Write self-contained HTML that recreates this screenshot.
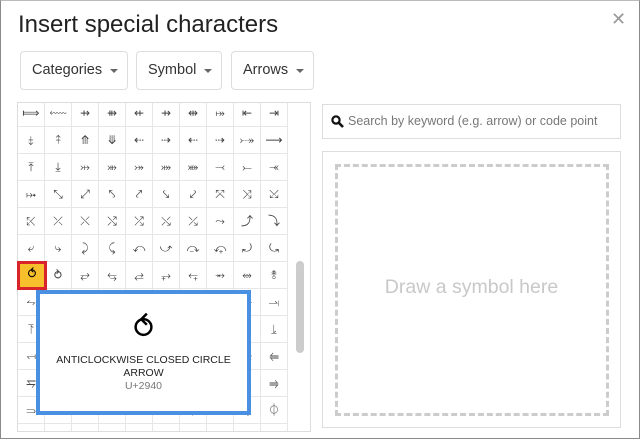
<!DOCTYPE html>
<html><head><meta charset="utf-8"><style>
*{box-sizing:border-box;margin:0;padding:0}
body{width:640px;height:439px;background:#fff;position:relative;overflow:hidden;font-family:"Liberation Sans","DejaVu Sans",sans-serif}
.frame{position:absolute;left:0;top:0;width:640px;height:439px;border:1px solid #8a8a8a;border-top-color:#bbb}
.title{position:absolute;left:18px;top:11px;font-size:24px;color:#222}
.close{position:absolute;left:611px;top:9px;font-size:18px;color:#999}
.btn{position:absolute;top:51px;height:39px;border:1px solid #ddd;border-radius:4px;font-size:14.5px;color:#333;line-height:37px;padding-left:11px}
.btn:after{content:"";position:absolute;right:9px;top:17px;border-left:4px solid transparent;border-right:4px solid transparent;border-top:4px solid #666}
.gridwrap{position:absolute;left:17px;top:102px;width:294px;height:330px;border:1px solid #ddd;overflow:hidden}
.cell{position:absolute;width:27px;height:27px;border-right:1px solid #e6e6e6;border-bottom:1px solid #e6e6e6;text-align:center;line-height:26px;font-size:12px;color:#444;font-family:"DejaVu Sans",sans-serif}
.sb{position:absolute;left:296px;top:261px;width:8px;height:92px;background:#ccc;border-radius:4px}
.sel{position:absolute;left:17px;top:261px;width:30px;height:29px;background:#f7bf2c;border:3px solid #d8232a;text-align:center;line-height:22px;font-size:13px;font-family:"DejaVu Sans",sans-serif}
.tip{position:absolute;left:36px;top:290px;width:215px;height:125px;background:#fff;border:4px solid #4a90e2;text-align:center}
.search{position:absolute;left:322px;top:104px;width:299px;height:35px;border:1px solid #ddd;font-size:12.5px;color:#777;line-height:33px;padding-left:25px}
.draw{position:absolute;left:322px;top:151px;width:299px;height:277px;border:1px solid #ddd}
.dash{position:absolute;left:12px;top:12px;width:274px;height:252px;border:3px dashed #ccc}
.dt{position:absolute;left:0;width:100%;top:124px;text-align:center;font-size:19.5px;color:#c8c8c8}
</style></head><body>
<div class="frame"></div>
<div class="title">Insert special characters</div>
<div class="close">✕</div>
<div class="btn" style="left:20px;width:108px">Categories</div>
<div class="btn" style="left:136px;width:86px">Symbol</div>
<div class="btn" style="left:231px;width:83px">Arrows</div>
<div class="gridwrap" id="g"></div>
<div class="sb"></div>
<div class="sel">⥀</div>
<div class="tip">
<div style="font-size:30px;margin-top:18px;line-height:34px;font-family:'DejaVu Sans',sans-serif">⥀</div>
<div style="font-size:10.5px;color:#222;margin-top:8px;line-height:13px">ANTICLOCKWISE CLOSED CIRCLE<br>ARROW</div>
<div style="font-size:10.5px;color:#777;line-height:13px">U+2940</div>
</div>
<div class="search"><svg style="position:absolute;left:8px;top:10px" width="13" height="13" viewBox="0 0 13 13"><circle cx="5" cy="5" r="3.6" fill="none" stroke="#111" stroke-width="2.2"/><path d="M7.8 7.8l4.2 4.2" stroke="#111" stroke-width="2.6"/></svg>Search by keyword (e.g. arrow) or code point</div>
<div class="draw"><div class="dash"></div><div class="dt">Draw a symbol here</div></div>
<script>
var rows=["⟾⬳⇸⇻⇷⇸⇹⤅⇤⇥","⤈⤉⤊⤋⇠⇢⇠⇢⤐⟶","⤒⤓⤔⤕⤖⤗⤘⤙⤚⤛","⤠⤡⤢⤣⤤⤥⤦⤧⤨⤩","⤪⤫⤬⤭⤮⤯⤰⤳⤴⤵","⤶⤷⤸⤹⤺⤻⤼⤽⤾⤿","⥀⥁⥂⥃⥄⥅⥆⥇⥈⥉","⥊⥋⥌⥍⥎⥏⥐⥑⥒⥓","⥔⥕⥖⥗⥘⥙⥚⥛⥜⥕","⥞⥟⥠⥡⥢⥣⥤⥥⥦⥢","⥧⥨⥩⥪⥫⥬⥭⥮⥯⥤","⥰⥱⥲⥳⥴⥵⥶⥷⥸⏀","⥹⥺⥻⥼⥽⥾⥿⤀⤁⤂"];
var g=document.getElementById('g'),h='';
for(var r=0;r<rows.length;r++){var c=Array.from(rows[r]);for(var i=0;i<10;i++){h+='<div class="cell" style="left:'+(i*27)+'px;top:'+(r*27-3)+'px">'+c[i]+'</div>';}}
g.innerHTML=h;
</script>
</body></html>
